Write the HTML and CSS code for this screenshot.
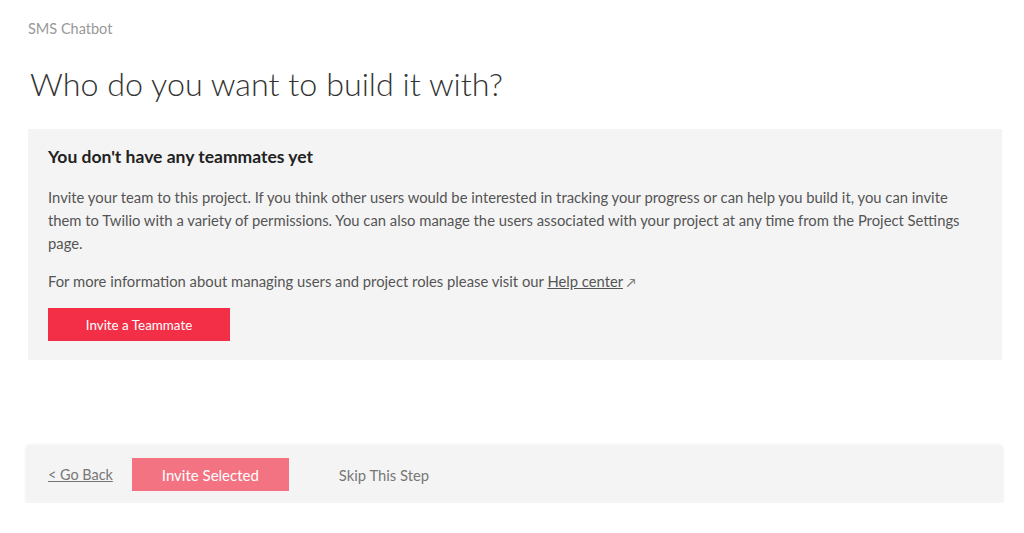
FILE: index.html
```html
<!DOCTYPE html>
<html lang="en">
<head>
  <meta charset="UTF-8">
  <meta name="viewport" content="width=device-width, initial-scale=1.0">
  <link rel="stylesheet" href="styles.css">
  <title>SMS Chatbot - Team</title>
</head>
<body>

<div class="page">
  <div class="breadcrumb">SMS Chatbot</div>
  <h1 class="title">Who do you want to build it with?</h1>

  <div class="panel">
    <h2 class="panel-title">You don't have any teammates yet</h2>
    <p class="panel-text">Invite your team to this project. If you think other users would be interested in tracking your progress or can help you build it, you can invite them to Twilio with a variety of permissions. You can also manage the users associated with your project at any time from the Project Settings page.</p>
    <p class="panel-text panel-text-last">For more information about managing users and project roles please visit our <a href="#" class="link">Help center</a> <span class="ext">&#8599;</span></p>
    <button class="btn btn-primary">Invite a Teammate</button>
  </div>

  <div class="footer-bar">
    <a href="#" class="back-link">&lt; Go Back</a>
    <button class="btn btn-disabled">Invite Selected</button>
    <a href="#" class="skip-link">Skip This Step</a>
  </div>
</div>

</body>
</html>
```
FILE: styles.css
```css
body {
  margin: 0;
  font-family: 'Lato', 'Open Sans', sans-serif;
  color: #333;
  background-color: #fff;
}

.page {
  padding: 20px 22px 0 28px;
}

.breadcrumb {
  font-size: 14.5px;
  color: #999;
  line-height: 18px;
}

.title {
  margin: 26px 0 25px 2px;
  font-size: 32.3px;
  font-weight: 300;
  line-height: 40px;
  color: #333;
}

.panel {
  background-color: #f4f4f4;
  padding: 18px 30px 19px 20px;
}

.panel-title {
  margin: 0 0 19px;
  font-size: 17.5px;
  font-weight: 700;
  line-height: 20px;
  color: #222;
}

.panel-text {
  margin: 0 0 15px;
  font-size: 14.8px;
  line-height: 23px;
  color: #555;
}

.panel-text-last {
  margin-bottom: 14px;
}

.link {
  color: #555;
  text-decoration: underline;
}

.ext {
  font-size: 12px;
  color: #666;
}

.btn {
  display: block;
  border: none;
  font-family: inherit;
  color: #fff;
  height: 33px;
  cursor: pointer;
  padding: 0;
}

.btn-primary {
  background-color: #f22f46;
  width: 182px;
  font-size: 13.4px;
}

.btn-disabled {
  background-color: #f37383;
  width: 157px;
  font-size: 15px;
}

.footer-bar {
  margin: 86px 0 0 -1px;
  height: 57px;
  background-color: #f4f4f4;
  box-shadow: 0 0 4px rgba(0, 0, 0, 0.12);
  display: flex;
  align-items: center;
  padding-left: 21px;
}

.back-link {
  font-size: 14.4px;
  color: #777;
  text-decoration: underline;
  margin-right: 19px;
}

.skip-link {
  font-size: 14.8px;
  color: #777;
  text-decoration: none;
  margin-left: 50px;
}
```
